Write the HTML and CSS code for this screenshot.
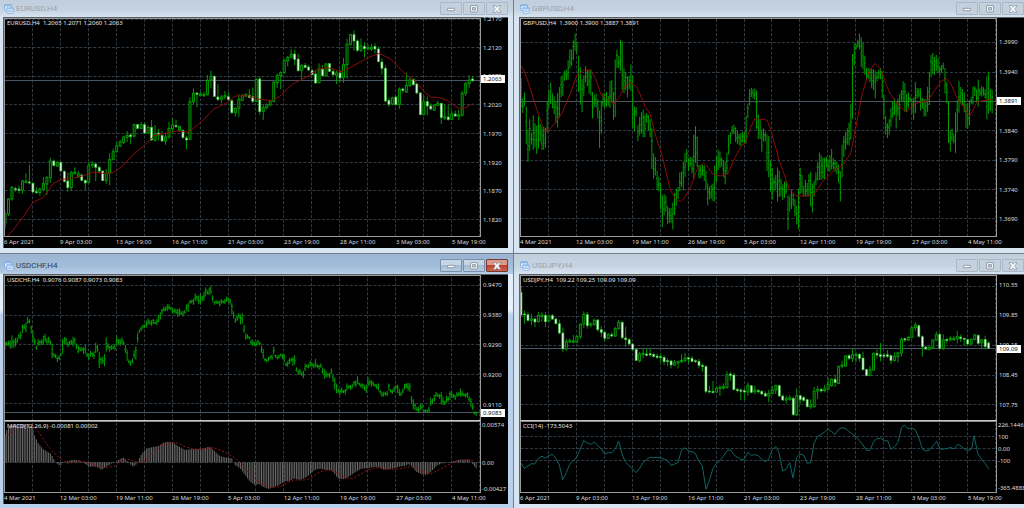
FILE: index.html
```html
<!DOCTYPE html>
<html lang="en">
<head>
<meta charset="utf-8">
<title>Charts</title>
<link rel="stylesheet" href="styles.css">
</head>
<body>
<svg class="defs" aria-hidden="true">
  <symbol id="chart-icon" viewBox="0 0 30 30">
    <rect x="1.500" y="2" width="21" height="17" rx="2" fill="#f4f9ff" stroke="#5f9bdc" stroke-width="2"/>
    <path d="M2 4h20v3H2z" fill="#5d9ae0"/>
    <path d="M4 13h4l2-3 3 5" fill="none" stroke="#5d9ae0" stroke-width="2"/>
    <rect x="9" y="11" width="19" height="17" rx="3" fill="#eaf3ff" stroke="#6ea3e0" stroke-width="2"/>
    <path d="M10 13h17v3H10z" fill="#7baee8"/>
    <path d="M12 22h4l2-3 3 4 2-2h3" fill="none" stroke="#4f86ea" stroke-width="2"/>
  </symbol>
  <symbol id="min-icon" viewBox="0 0 30 24"><rect x="4" y="10" width="22" height="7" rx="2" fill="#fff" stroke="#7f8995" stroke-width="2.500"/></symbol>
  <symbol id="max-icon" viewBox="0 0 30 24"><rect x="5" y="2" width="20" height="19" rx="1" fill="#fff" stroke="#7f8995" stroke-width="2.500"/><rect x="11" y="8" width="8" height="7" fill="#c9d5e2" stroke="#7f8995" stroke-width="2.500"/></symbol>
  <symbol id="close-icon" viewBox="0 0 30 24"><path d="M3 2h8l4 5 4-5h8l-7 10 7 10h-8l-4-5-4 5H3l7-10z" fill="#fff" stroke="#7f8995" stroke-width="2"/></symbol>
</svg>
<main class="desk">
  <section class="window window-top">
    <header class="bar"><svg class="logo"><use href="#chart-icon"/></svg><h2 class="name">EURUSD,H4</h2>
      <button class="btn" aria-label="Minimize"><svg><use href="#min-icon"/></svg></button><button class="btn" aria-label="Maximize"><svg><use href="#max-icon"/></svg></button><button class="btn" aria-label="Close"><svg><use href="#close-icon"/></svg></button></header>
    <div class="chart">
      <div class="plot"><svg class="draw" data-chart="eur" viewBox="15 57 1425 651" preserveAspectRatio="none"></svg><p class="info">EURUSD,H4&nbsp; 1.2065 1.2071 1.2060 1.2063</p></div>
      <div class="prices prices-eur"><span>1.2170</span><span>1.2120</span><span>1.2070</span><span>1.2020</span><span>1.1970</span><span>1.1920</span><span>1.1870</span><span>1.1820</span><b class="tag tag-eur">1.2063</b></div>
      <div class="times"><span>6 Apr 2021</span><span>9 Apr 03:00</span><span>13 Apr 19:00</span><span>16 Apr 11:00</span><span>21 Apr 03:00</span><span>23 Apr 19:00</span><span>28 Apr 11:00</span><span>3 May 03:00</span><span>5 May 19:00</span></div>
    </div>
  </section>
  <section class="window window-top window-right">
    <header class="bar"><svg class="logo"><use href="#chart-icon"/></svg><h2 class="name">GBPUSD,H4</h2>
      <button class="btn" aria-label="Minimize"><svg><use href="#min-icon"/></svg></button><button class="btn" aria-label="Maximize"><svg><use href="#max-icon"/></svg></button><button class="btn" aria-label="Close"><svg><use href="#close-icon"/></svg></button></header>
    <div class="chart">
      <div class="plot"><svg class="draw" data-chart="gbp" viewBox="27 57 1425 651" preserveAspectRatio="none"></svg><p class="info">GBPUSD,H4&nbsp; 1.3900 1.3900 1.3887 1.3891</p></div>
      <div class="prices prices-gbp"><span>1.3990</span><span>1.3940</span><span>1.3890</span><span>1.3840</span><span>1.3790</span><span>1.3740</span><span>1.3690</span><b class="tag tag-gbp">1.3891</b></div>
      <div class="times"><span>4 Mar 2021</span><span>12 Mar 03:00</span><span>19 Mar 11:00</span><span>26 Mar 19:00</span><span>5 Apr 03:00</span><span>12 Apr 11:00</span><span>19 Apr 19:00</span><span>27 Apr 03:00</span><span>4 May 11:00</span></div>
    </div>
  </section>
  <section class="window window-active">
    <header class="bar"><svg class="logo"><use href="#chart-icon"/></svg><h2 class="name">USDCHF,H4</h2>
      <button class="btn" aria-label="Minimize"><svg><use href="#min-icon"/></svg></button><button class="btn" aria-label="Maximize"><svg><use href="#max-icon"/></svg></button><button class="btn btn-close" aria-label="Close"><svg><use href="#close-icon"/></svg></button></header>
    <div class="chart chart-split">
      <div class="plot plot-main"><svg class="draw" data-chart="chf" viewBox="15 78 1425 432" preserveAspectRatio="none"></svg><p class="info">USDCHF,H4&nbsp; 0.9076 0.9087 0.9073 0.9083</p></div>
      <div class="prices prices-chf"><span>0.9470</span><span>0.9380</span><span>0.9290</span><span>0.9200</span><span>0.9110</span><b class="tag tag-chf">0.9083</b></div>
      <div class="plot plot-sub"><svg class="draw" data-chart="macd" viewBox="15 516 1425 210" preserveAspectRatio="none"></svg><p class="info">MACD(12,26,9) -0.00081 0.00002</p></div>
      <div class="prices prices-macd"><span>0.00574</span><span>0.00</span><span>-0.00427</span></div>
      <div class="times"><span>4 Mar 2021</span><span>12 Mar 03:00</span><span>19 Mar 11:00</span><span>26 Mar 19:00</span><span>5 Apr 03:00</span><span>12 Apr 11:00</span><span>19 Apr 19:00</span><span>27 Apr 03:00</span><span>4 May 11:00</span></div>
    </div>
  </section>
  <section class="window window-right">
    <header class="bar"><svg class="logo"><use href="#chart-icon"/></svg><h2 class="name">USDJPY,H4</h2>
      <button class="btn" aria-label="Minimize"><svg><use href="#min-icon"/></svg></button><button class="btn" aria-label="Maximize"><svg><use href="#max-icon"/></svg></button><button class="btn" aria-label="Close"><svg><use href="#close-icon"/></svg></button></header>
    <div class="chart chart-split">
      <div class="plot plot-main"><svg class="draw" data-chart="jpy" viewBox="27 78 1425 432" preserveAspectRatio="none"></svg><p class="info">USDJPY,H4&nbsp; 109.22 109.25 109.09 109.09</p></div>
      <div class="prices prices-chf"><span>110.55</span><span>109.85</span><span>109.15</span><span>108.45</span><span>107.75</span><b class="tag tag-jpy">109.09</b></div>
      <div class="plot plot-sub"><svg class="draw" data-chart="cci" viewBox="27 516 1425 210" preserveAspectRatio="none"></svg><p class="info">CCI(14) -173.5043</p></div>
      <div class="prices prices-cci"><span>226.1446</span><div class="levels"><span>100</span><span>0.00</span><span>-100</span></div><span>-365.4888</span></div>
      <div class="times"><span>6 Apr 2021</span><span>9 Apr 03:00</span><span>13 Apr 19:00</span><span>16 Apr 11:00</span><span>21 Apr 03:00</span><span>23 Apr 19:00</span><span>28 Apr 11:00</span><span>3 May 03:00</span><span>5 May 19:00</span></div>
    </div>
  </section>
</main>
<script src="charts.js"></script>
</body>
</html>
```
FILE: styles.css
```css
* { box-sizing: border-box; }
body { margin: 0; background: #d7e4f2; font-family: "Noto Sans", "Open Sans", sans-serif; }
.defs { display: none; }
.desk { display: grid; grid-template-columns: 257fr 255fr; grid-template-rows: 1fr 1fr; height: 100vh; overflow: hidden; }
.window { display: flex; flex-direction: column; min-width: 0; min-height: 0; padding: 0 5px 4px 3px; background: #d7e4f2; border-right: 1px solid #767c83; }
.window-top { padding-bottom: 5px; border-bottom: 1px solid #767c83; }
.window-right { padding-left: 5px; padding-right: 0; border-right: 0; }
.window-active { background: linear-gradient(#e4eefa 15%, #e8f1fb 22%, #b9d1ea 24%); }

.bar { display: flex; align-items: center; height: 20px; margin: 0 -5px 0 -3px; padding: 4px 5px 1px 4px; background: linear-gradient(#c0cedd, #c6d3e1 60%, #d6e3f0); }
.window-top .bar { height: 17px; padding-top: 1px; }
.window-right .bar { margin: 0 0 0 -5px; padding-left: 6px; padding-right: 0; }
.window-active .bar { background: linear-gradient(#9ab5d2, #a2bcd8 60%, #b5cde7); }
.logo { width: 10px; height: 10px; flex: none; }
.name { flex: 1; margin: 0 0 0 2px; font: 400 8px/12px Roboto, "Noto Sans", sans-serif; color: #9ba3ac; }
.window-active .name { color: #2b4058; }
.btn { display: flex; align-items: center; justify-content: center; width: 22px; height: 13px; margin-left: 1px; padding: 0; border: 1px solid #a9b7c7; border-radius: 1px; background: #c3d0de; }
.btn svg { width: 10px; height: 8px; }
.window-active .btn { border-color: #7890ab; background: linear-gradient(#c6d6e7 45%, #a5bbd3 50%, #b7cce2); }
.window-active .btn-close { border-color: #74392f; background: linear-gradient(#dc9a8c 45%, #bf412b 50%, #cd6249); }

.chart { flex: 1; min-height: 0; display: grid; grid-template-columns: minmax(0, 1fr) 27px; grid-template-rows: minmax(0, 1fr) 11px; background: #000; border: 1px solid #5c6064; border-right: 0; border-bottom: 0; color: #dcdcdc; font-size: 6px; line-height: 8px; white-space: nowrap; }
.chart-split { grid-template-rows: minmax(0, 146fr) minmax(0, 72fr) 11px; }
.plot { position: relative; border: 1px solid #9a9a9a; min-width: 0; min-height: 0; }
.plot-main { border-bottom-color: #c8c8c8; }
.plot-sub { border-top-color: #8a8a8a; }
.draw { display: block; width: 100%; height: 100%; }
.info { position: absolute; left: 2px; top: 0; margin: 0; color: #e6e6e6; }
.prices { position: relative; display: flex; flex-direction: column; justify-content: space-between; padding-left: 2px; min-height: 0; }
.prices-eur { margin-top: -3px; padding-bottom: 13px; }
.prices-gbp { padding-top: 20px; padding-bottom: 14px; }
.prices-chf { padding-top: 6px; padding-bottom: 12px; }
.prices-macd, .prices-cci { padding-left: 1px; padding-bottom: 1px; }
.prices-macd { display: grid; grid-template-rows: 37fr 26fr 8px; padding-bottom: 0; }
.levels { display: flex; flex-direction: column; gap: 4px; margin-bottom: 16px; }
.tag { position: absolute; left: 0; width: 24px; padding-left: 2px; font-weight: 400; background: #fff; color: #111; }
.tag-eur { top: 27%; }
.tag-gbp { top: 36%; }
.tag-chf { bottom: 3%; }
.tag-jpy { top: 48%; }
.times { grid-column: 1 / -1; display: grid; grid-template-columns: repeat(9, minmax(0, 1fr)); line-height: 10px; }

.grid { fill: none; stroke: #303a43; stroke-width: 3; stroke-dasharray: 9 5; }
.price { stroke: #485664; stroke-width: 3; }
.wick, .bars { fill: none; stroke: #009600; stroke-width: 3; }
.bars { stroke: #00a000; }
.up { fill: #001c00; stroke: #009a00; stroke-width: 3; }
.down { fill: #eaffea; stroke: #38b838; stroke-width: 2; }
.average { fill: none; stroke: #8c0c0c; stroke-width: 3; }
.signal { fill: none; stroke: #901414; stroke-width: 3; stroke-dasharray: 7 5; }
.hist { fill: none; stroke: #6c6c6c; stroke-width: 3; }
.cci { fill: none; stroke: #106464; stroke-width: 3; }
```
FILE: charts.js
```javascript
// Each candle is "high top bottom low", then u (rising) or d (falling); x follows from its index.
const candles = {
eur: `632 642 668 686u,594 597 642 648u,559 562 597 602u,560 566 569 575d,557 567 571 580d,540 543 570 582u,520 544 547 550u,494 546 549 553d,545 550 576 578d,562 575 578 582d,563 568 578 587u,531 551 567 573u,528 533 552 585u,473 483 533 548u,479 483 497 499d,484 487 498 501u,485 487 513 515d,511 514 544 548d,518 543 563 575d,513 518 562 573u,502 517 520 523u,513 522 529 533u,521 525 541 543d,538 541 549 570d,487 496 547 550u,483 492 496 505u,489 492 502 543d,498 502 513 518d,511 513 542 543d,507 520 542 552u,460 479 520 557u,446 455 479 481u,426 438 455 458u,420 426 438 440u,407 411 427 432u,393 406 412 427u,400 405 410 433d,371 374 408 413u,372 374 385 388d,366 374 385 387u,368 374 399 402d,377 382 399 401u,360 382 420 422d,375 400 421 424u,387 399 405 421d,393 406 423 426d,398 411 423 434u,365 385 411 416u,355 375 386 401u,360 376 380 384d,377 380 390 392u,388 391 413 416d,407 414 420 448d,292 305 418 420u,265 280 305 312u,277 279 283 322d,275 282 286 289u,275 283 287 291u,225 241 284 286u,212 229 240 265u,226 229 289 291d,252 291 298 304d,285 291 298 311u,273 287 291 298u,277 290 299 302d,299 302 338 342d,322 325 338 350u,283 298 325 350u,282 287 301 303u,280 284 288 291u,267 286 292 295d,263 290 304 308d,235 238 304 306u,229 237 335 345d,315 323 334 360u,311 313 323 328u,299 302 315 318u,242 247 304 307u,220 226 248 264u,214 218 227 268u,177 182 218 221u,168 172 183 199u,147 163 172 174u,149 162 178 196d,161 177 212 215d,193 196 211 243u,189 196 202 205d,195 201 210 213d,206 212 224 226d,211 222 249 251d,190 207 248 250u,195 208 227 230d,189 192 227 230u,189 191 214 216d,204 214 224 228d,213 219 226 252u,208 219 234 247d,174 194 232 249u,116 133 194 236u,101 104 133 137u,91 104 123 152d,118 123 151 155d,115 138 151 156u,127 139 146 173d,133 143 147 151u,132 142 147 153u,130 139 147 160d,139 147 185 187d,175 186 205 224d,196 205 303 308d,293 301 313 321d,290 294 312 316u,288 291 314 316d,262 268 314 327u,263 267 272 278d,218 256 276 279u,231 240 257 261u,235 238 254 258d,249 252 279 283d,276 279 344 346d,287 305 343 347u,290 305 318 345d,310 318 327 331d,312 315 330 333u,302 310 316 318u,308 310 353 372d,315 350 355 360u,315 351 359 362d,332 342 358 361u,332 342 348 351d,330 345 349 360u,272 280 346 349u,245 251 280 288u,225 240 251 264u,228 237 242 246d`,
jpy: `108 127 195 198d,182 192 195 221d,187 194 211 214d,193 207 211 226u,203 207 216 231d,186 196 215 218u,186 196 199 215u,186 196 215 231d,194 198 213 216u,192 197 207 210d,203 207 221 224d,209 221 249 253d,233 249 297 307d,267 275 297 302u,265 272 276 280u,255 273 277 280u,255 260 276 279u,220 223 260 267u,184 193 222 234u,186 194 227 236d,217 222 225 232u,206 211 224 227u,207 210 239 245d,228 239 247 261d,243 247 265 274d,249 254 265 267u,247 254 258 263d,231 236 258 261u,210 217 236 238u,213 217 263 268d,230 264 269 290d,264 269 282 284d,279 282 298 304d,294 298 331 333d,306 312 332 338u,296 310 313 325u,296 312 316 320d,294 311 315 320d,308 313 319 323d,310 318 322 327d,310 320 323 338d,316 322 335 345d,325 332 335 348d,329 333 345 355d,330 337 345 347u,333 335 339 355u,313 331 335 338u,309 325 331 337u,320 323 327 340d,318 325 334 337d,328 332 335 339d,327 334 346 355d,340 346 350 365d,345 350 424 430d,407 423 426 430d,393 424 428 431d,410 415 426 429u,406 412 416 438u,400 410 414 419u,364 374 413 416u,366 372 376 392d,370 375 419 421d,413 418 422 428d,415 420 424 450d,415 422 426 450d,397 406 426 437u,405 407 427 430d,407 420 425 433u,417 422 425 430d,420 424 432 435d,424 431 438 440d,419 430 438 457u,408 420 430 433u,404 407 420 432u,404 407 438 441d,433 438 450 453d,437 446 450 461u,435 443 448 452u,440 445 494 498d,415 437 495 498u,433 437 449 461d,439 442 451 455d,446 449 470 473d,448 465 471 477u,411 424 470 473u,408 418 423 447u,414 418 423 428d,405 417 422 427u,383 403 417 421u,385 388 407 410u,374 388 398 411d,346 350 400 402u,333 345 349 355u,315 318 348 351u,313 317 325 330d,296 314 325 336u,307 313 317 336u,310 313 325 335d,305 324 359 362d,356 359 377 379d,348 359 376 379u,307 311 360 362u,299 310 315 325d,279 314 319 334d,310 315 319 324d,300 314 319 324d,313 317 331 342d,307 319 331 335u,305 309 320 337u,263 268 309 320u,263 266 270 276d,257 262 270 273u,230 233 262 265u,217 225 233 243u,224 227 259 263d,256 260 290 320d,287 291 297 300d,285 292 298 302u,268 270 293 296u,244 254 270 273u,249 253 295 299d,253 270 295 300u,264 268 272 280d,258 265 269 275u,258 265 269 273u,243 260 266 280u,254 261 266 276d,262 265 268 288d,265 269 282 284d,265 268 282 285u,252 255 268 271u,253 256 280 284d,267 270 278 298u,257 268 290 298d,274 279 295 297d`
};

// Price ranges as "x high low".
const ranges = {
gbp: `26 218 320,32 295 345,37 272 318,42 300 428,47 395 500,52 338 470,57 400 430,63 345 462,68 360 450,73 370 462,78 348 460,84 365 430,90 372 450,96 380 458,101 375 450,106 290 395,111 270 330,116 240 320,121 275 325,127 290 350,132 295 378,137 268 382,142 262 365,147 222 300,152 218 290,158 212 245,163 205 245,168 175 240,173 148 212,178 145 205,184 115 180,189 100 158,194 118 162,199 150 272,204 200 325,210 225 350,215 220 290,220 198 252,226 203 265,231 203 280,236 205 292,241 265 368,246 280 320,251 280 325,257 290 360,262 320 445,267 305 418,273 275 325,278 275 325,283 275 325,288 288 322,293 233 325,299 240 312,304 270 370,309 160 362,314 148 210,320 165 208,325 108 210,330 120 285,335 195 290,341 210 270,346 228 300,351 225 272,356 182 262,361 220 400,367 310 405,372 315 345,377 378 430,382 345 415,388 330 400,393 328 420,398 335 425,403 335 365,408 345 395,414 350 415,419 368 505,424 460 545,429 460 530,435 505 570,440 530 575,445 535 635,450 575 685,455 582 655,461 580 640,466 612 672,471 625 675,476 620 672,482 600 690,487 580 655,492 560 625,497 562 600,502 518 580,508 512 565,513 475 575,518 462 545,523 438 490,528 470 515,534 470 500,539 475 525,544 390 540,550 378 500,555 392 512,560 490 535,565 495 540,570 490 530,576 490 540,581 510 570,586 540 628,591 555 598,596 555 600,602 550 610,607 485 610,612 475 560,617 440 520,622 445 505,628 472 500,633 475 535,638 478 555,643 468 540,649 398 475,654 395 435,659 378 405,665 370 405,670 375 425,675 392 435,680 398 440,685 395 440,690 395 430,696 400 435,701 340 440,706 318 365,712 262 325,717 260 290,722 268 300,727 262 292,733 252 385,738 345 425,743 345 420,748 380 460,754 385 430,759 392 420,764 392 510,769 400 540,775 470 585,780 490 600,785 535 580,791 520 575,796 490 605,801 510 600,807 530 595,812 548 600,817 545 600,822 535 580,828 575 690,833 590 640,838 560 635,843 575 615,849 598 655,854 612 680,859 555 692,864 503 590,869 515 585,875 555 590,880 540 595,885 545 595,890 515 585,896 515 630,901 540 650,906 538 590,911 520 560,916 480 550,922 448 540,927 465 548,932 465 545,938 465 540,943 470 505,948 475 520,953 460 515,958 445 515,963 470 512,969 475 515,974 485 525,979 485 550,984 510 610,990 435 545,995 400 480,1000 390 450,1006 385 440,1011 360 445,1016 305 420,1021 165 390,1026 122 210,1032 130 150,1037 120 145,1042 95 150,1047 100 200,1052 125 215,1057 155 230,1063 200 240,1068 205 240,1073 200 250,1079 200 265,1084 208 275,1089 200 310,1094 215 245,1099 210 240,1105 200 240,1110 200 290,1115 280 360,1120 338 410,1125 365 415,1131 360 410,1136 320 390,1141 298 355,1147 295 350,1152 300 398,1157 290 345,1162 285 375,1167 270 310,1172 235 300,1177 245 345,1183 275 345,1188 270 325,1194 290 305,1199 290 345,1204 290 360,1209 245 355,1215 260 300,1220 262 290,1226 265 340,1231 290 330,1236 290 350,1241 300 355,1247 250 345,1252 205 315,1257 165 240,1262 150 230,1267 165 225,1273 165 218,1278 170 222,1284 200 225,1289 195 220,1294 185 210,1299 195 280,1305 250 320,1310 290 450,1316 395 455,1321 385 425,1326 400 435,1331 320 460,1336 300 405,1341 230 350,1346 255 310,1352 268 320,1357 270 345,1362 305 385,1367 310 395,1373 290 385,1378 290 310,1383 260 320,1388 255 290,1394 265 305,1399 238 330,1404 262 290,1409 255 290,1415 262 290,1420 265 300,1425 213 360,1430 215 355,1436 262 340`,
chf: `14 265 300,20 275 292,30 262 295,38 255 310,46 255 290,52 262 285,60 240 270,66 225 260,72 215 245,80 205 248,86 198 222,92 215 245,98 240 290,104 255 295,110 285 300,116 265 295,124 262 285,130 258 290,136 238 288,142 260 285,150 262 290,156 265 325,162 310 325,168 305 332,175 318 338,182 305 325,188 252 310,194 262 290,200 250 295,206 275 290,212 265 290,218 248 290,226 265 292,232 275 310,240 290 310,248 285 310,256 285 320,264 305 330,272 302 325,280 300 328,287 278 320,293 275 315,298 290 355,304 325 350,312 305 352,318 262 320,324 270 308,330 282 305,336 285 305,342 280 302,348 255 300,354 260 290,362 260 288,368 262 290,375 275 305,382 300 345,390 328 348,398 325 345,406 280 335,412 250 290,418 232 255,426 225 240,434 218 240,440 203 232,448 205 230,456 205 228,464 212 225,472 200 225,480 175 222,488 170 190,496 165 190,503 155 182,510 165 185,518 172 190,524 175 195,532 168 200,538 175 205,546 178 200,554 180 195,562 150 190,570 150 165,578 142 165,586 130 162,593 128 160,602 130 175,608 130 160,614 112 150,622 115 140,630 103 135,636 122 165,644 152 165,652 150 165,660 145 170,668 148 165,676 140 162,684 140 160,692 138 165,698 165 215,704 200 218,712 195 218,718 178 215,724 185 225,732 212 260,738 245 270,746 255 270,752 262 285,760 270 295,772 270 288,778 270 288,784 278 308,792 300 340,798 325 338,806 320 338,814 310 330,821 290 320,828 312 328,836 315 330,844 305 322,852 312 345,860 335 355,866 325 350,874 318 340,882 310 350,888 345 370,896 355 375,904 362 382,910 355 385,916 340 370,924 338 355,932 332 355,940 335 355,948 326 360,956 340 360,964 340 358,970 345 385,978 362 390,986 365 385,994 355 378,1002 362 415,1008 400 440,1016 410 435,1024 412 435,1032 415 435,1040 400 430,1048 400 420,1056 402 420,1064 385 412,1072 378 410,1080 395 412,1088 400 420,1096 398 430,1104 380 422,1112 382 410,1120 395 412,1128 398 415,1136 400 430,1144 420 440,1152 425 445,1160 420 440,1166 400 430,1174 415 432,1182 410 430,1188 398 425,1194 395 430,1200 420 448,1208 412 430,1216 400 425,1222 390 420,1230 400 435,1236 430 475,1244 460 488,1252 465 490,1258 465 488,1264 450 485,1270 475 488,1278 478 490,1286 465 490,1294 440 475,1302 428 455,1310 425 445,1318 428 445,1326 425 480,1334 448 465,1342 435 465,1350 415 450,1358 425 450,1366 430 450,1374 425 445,1381 407 440,1388 425 445,1396 425 442,1404 428 450,1411 430 470,1418 462 485,1423 480 498,1428 480 498`
};

const lines = {
eur: "22 709,45 683,70 650,98 608,130 592,160 550,185 538,210 536,240 530,280 517,320 521,340 517,365 500,400 463,433 436,465 405,490 401,530 393,565 397,610 360,640 328,680 308,705 288,745 287,768 296,813 302,838 290,878 252,918 232,953 207,983 203,1023 215,1043 207,1068 193,1108 171,1138 160,1173 178,1208 215,1248 245,1273 275,1293 292,1313 292,1343 302,1378 326,1396 323,1418 311",
gbp: "26 196,35 210,50 250,70 315,90 375,100 393,108 394,130 368,150 340,175 280,195 225,215 210,235 210,250 235,267 285,280 292,305 312,320 293,340 258,357 249,375 262,400 320,415 345,430 405,450 465,475 570,492 600,505 605,515 597,535 563,555 508,575 489,590 505,602 522,625 528,648 520,670 470,690 435,700 430,715 385,728 357,757 358,766 362,778 395,801 480,831 565,851 587,896 588,911 578,931 545,966 510,991 497,1016 460,1031 385,1051 280,1071 215,1089 190,1106 208,1131 275,1156 312,1181 335,1211 310,1246 303,1266 275,1286 245,1303 236,1316 250,1336 295,1354 320,1373 348,1396 305,1439 298",
macd: "14 567,30 548,50 532,75 525,100 530,115 545,130 568,150 595,170 617,190 632,205 640,215 638,235 632,260 636,280 645,300 650,320 653,345 648,360 635,375 630,390 628,405 635,420 638,435 634,450 615,470 598,490 585,510 578,530 578,555 590,580 597,610 598,640 593,660 600,690 615,710 628,725 640,740 660,755 680,785 702,808 710,828 712,843 708,863 697,883 690,913 690,933 685,953 670,973 660,993 660,1008 668,1023 678,1043 685,1058 685,1078 675,1098 663,1118 655,1138 653,1168 658,1198 657,1233 649,1258 660,1288 672,1313 662,1338 648,1358 638,1378 631,1408 630,1423 633",
hist: "14 555,20 540,30 528,40 522,90 522,98 535,105 560,115 580,130 598,145 607,152 610,160 625,170 640,180 648,190 637,200 634,215 630,230 630,240 633,250 638,260 645,270 650,285 650,295 653,305 660,315 652,325 647,335 640,345 637,355 630,370 622,380 632,390 642,400 651,410 642,420 620,430 605,440 595,460 591,475 588,490 578,505 575,520 578,540 592,555 600,570 598,590 597,610 595,630 590,640 600,660 618,675 622,695 625,705 645,720 655,735 675,750 695,765 705,778 702,788 710,806 717,818 712,838 705,853 695,868 693,883 685,898 690,913 685,928 675,938 665,948 658,963 656,978 660,993 660,1003 670,1013 685,1028 688,1038 685,1058 672,1073 662,1088 655,1103 655,1118 651,1133 650,1153 660,1163 658,1183 655,1198 650,1213 648,1228 642,1238 652,1248 665,1268 674,1283 674,1298 660,1313 645,1328 640,1348 637,1363 633,1378 629,1408 629,1416 640,1428 655",
cci: "26 638,37 655,58 641,68 642,79 625,90 619,100 624,111 617,121 613,132 625,142 645,152 689,163 668,173 643,184 632,194 622,205 597,215 572,226 579,236 583,247 576,268 597,278 612,289 608,299 608,310 597,320 573,331 615,341 637,362 657,372 668,383 655,393 638,404 628,414 622,446 623,467 632,477 646,488 642,498 637,509 600,519 593,529 603,540 605,550 610,561 634,571 648,582 718,592 692,603 655,613 640,624 632,634 619,645 602,655 599,665 614,676 622,686 628,697 628,707 607,718 616,728 614,739 617,749 628,760 635,770 628,780 600,791 589,801 608,812 663,822 658,833 638,843 684,854 622,864 612,875 615,885 640,896 638,906 580,916 560,938 546,948 537,959 545,969 553,980 538,990 533,1001 536,1011 545,1021 552,1032 560,1043 572,1053 585,1064 602,1074 600,1085 575,1095 566,1106 564,1116 573,1127 572,1137 598,1148 590,1158 577,1169 532,1177 525,1188 536,1200 534,1211 541,1221 565,1232 598,1242 603,1253 600,1274 574,1284 598,1305 596,1316 592,1326 597,1337 583,1347 588,1358 598,1368 602,1379 597,1386 557,1398 612,1410 630,1421 642,1431 658"
};

const charts = {
  eur: { left: 14, rows: [58, 142, 229, 314, 400, 486, 571, 657], price: 241 },
  gbp: { left: 26, rows: [128, 216, 303, 391, 480, 568, 655], price: 303, spread: 0.9 },
  chf: { left: 14, rows: [106, 196, 283, 372, 461], price: 487, spread: 0.75 },
  macd: { left: 14, rows: [637] },
  jpy: { left: 26, rows: [109, 198, 286, 376, 464], price: 295 },
  cci: { left: 26, rows: [560, 596, 632] }
};

const STEP = 10.47;
const rowsOf = text => text.split(",").map(row => row.split(" ").map(parseFloat));
const center = v => Math.floor(v / 3) * 3 + 1.5;
const path = (cls, d) => `<path class="${cls}" d="${d}"/>`;
const polyline = (cls, text) => path(cls, "M" + text.split(",").join("L"));

function valueAt(points, x, column) {
  let i = 1;
  while (i < points.length - 1 && points[i][0] < x) i++;
  const a = points[i - 1], b = points[i];
  const t = Math.min(1, Math.max(0, (x - a[0]) / (b[0] - a[0])));
  return a[column] + (b[column] - a[column]) * t;
}

function drawGrid({ left, rows, price }) {
  let d = "";
  for (let k = 1; k <= 17; k++) d += `M${center(left + k * STEP * 8)} 57V726`;
  for (const y of rows) d += `M${left} ${center(y)}H${left + 1430}`;
  return path("grid", d) + (price ? path("price", `M${left} ${center(price)}H${left + 1430}`) : "");
}

function drawCandles(text, left) {
  return text.split(",").map((item, i) => {
    const [high, top, bottom, low] = item.split(" ").map(parseFloat);
    const x = left + 1 + i * STEP;
    const down = item.endsWith("d");
    const height = Math.max(bottom - top, 2);
    return path("wick", `M${x} ${high}V${low}`) +
      `<rect class="${down ? "down" : "up"}" x="${x - 3}" y="${top}" width="6" height="${height}"/>`;
  }).join("");
}

function drawBars(points, left, spread) {
  let d = "";
  for (let i = 0, x = left + 1; x < left + 1415; i++, x += STEP / 2) {
    const nearest = points.reduce((a, b) => Math.abs(b[0] - x) < Math.abs(a[0] - x) ? b : a);
    const top = (valueAt(points, x, 1) + nearest[1]) / 2;
    const bottom = (valueAt(points, x, 2) + nearest[2]) / 2;
    const slack = (bottom - top) * (1 - spread);
    const high = top + (i % 3 === 1 ? 0 : slack);
    const low = bottom - (i % 3 === 0 ? 0 : slack);
    const open = high + (low - high) * (0.3 + (i * 7 % 5) / 10);
    const close = high + (low - high) * (0.3 + (i * 3 % 5) / 10);
    d += `M${x} ${high}V${low}M${x - 3} ${open}H${x}M${x} ${close}H${x + 3}`;
  }
  return path("bars", d);
}

function drawHistogram(points, left) {
  let d = "";
  for (let x = left + 1; x < left + 1415; x += STEP / 2) d += `M${x} 637V${valueAt(points, x, 1)}`;
  return path("hist", d);
}

for (const svg of document.querySelectorAll(".draw")) {
  const key = svg.dataset.chart;
  const chart = charts[key];
  let out = drawGrid(chart);
  if (candles[key]) out += drawCandles(candles[key], chart.left);
  if (ranges[key]) out += drawBars(rowsOf(ranges[key]), chart.left, chart.spread);
  if (key === "macd") out += drawHistogram(rowsOf(lines.hist), chart.left) + polyline("signal", lines.macd);
  if (key === "cci") out += polyline("cci", lines.cci);
  if (key === "eur" || key === "gbp") out += polyline("average", lines[key]);
  svg.innerHTML = out;
}
```
